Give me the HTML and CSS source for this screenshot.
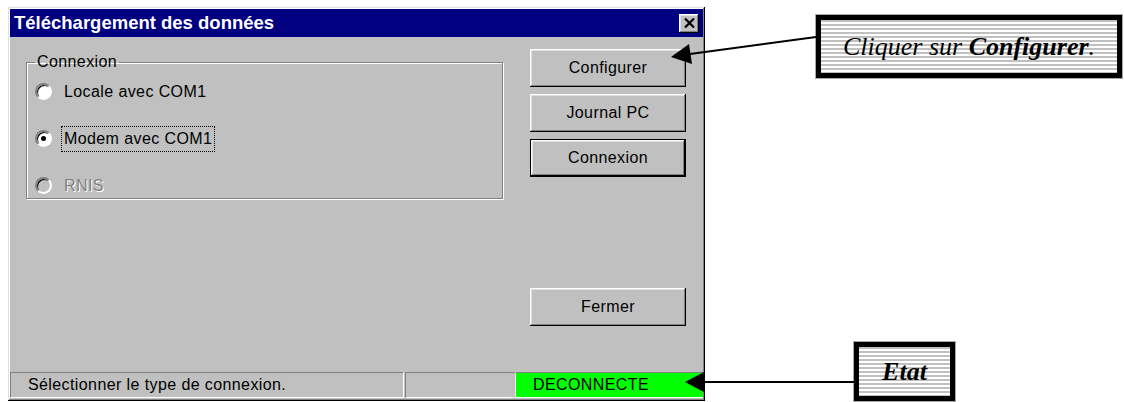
FILE: index.html
```html
<!DOCTYPE html>
<html lang="fr">
<head>
    <meta charset="UTF-8">
    <title>Téléchargement des données</title>
    <link rel="stylesheet" href="styles.css">
</head>
<body>
    <div class="window">
        <div class="titlebar">
            <span class="title">Téléchargement des données</span>
            <span class="close">
                <svg width="11" height="10" viewBox="0 0 11 10"><path d="M1 0.5 L10 9.5 M10 0.5 L1 9.5" stroke="#000" stroke-width="2.2"/></svg>
            </span>
        </div>
        <div class="content">
            <fieldset class="group">
                <legend>Connexion</legend>
                <label class="radio-row"><span class="radio"></span><span class="lbl">Locale avec COM1</span></label>
                <label class="radio-row"><span class="radio checked"></span><span class="lbl focus">Modem avec COM1</span></label>
                <label class="radio-row disabled"><span class="radio"></span><span class="lbl">RNIS</span></label>
            </fieldset>
            <div class="buttons">
                <button class="btn">Configurer</button>
                <button class="btn">Journal PC</button>
                <button class="btn default">Connexion</button>
                <button class="btn close-btn">Fermer</button>
            </div>
        </div>
        <div class="statusbar">
            <div class="pane msg">Sélectionner le type de connexion.</div>
            <div class="pane empty"></div>
            <div class="pane state">DECONNECTE</div>
        </div>
    </div>

    <div class="callout callout-config"><span>Cliquer sur <b>Configurer</b>.</span></div>
    <div class="callout callout-etat"><b>Etat</b></div>

    <svg class="arrows" width="1124" height="402" viewBox="0 0 1124 402">
        <line x1="690" y1="54" x2="816" y2="37" stroke="#000" stroke-width="2"/>
        <polygon points="671,57 692,64 689,44" fill="#000"/>
        <line x1="700" y1="382" x2="854" y2="382" stroke="#000" stroke-width="2"/>
        <polygon points="685,382 704,372 704,392" fill="#000"/>
    </svg>
</body>
</html>
```

FILE: styles.css
```css
body {
    margin: 0;
    padding: 7px 0 0 8px;
    background-color: #fff;
    font-family: "Liberation Sans", Arial, sans-serif;
    height: 402px;
    box-sizing: border-box;
    overflow: hidden;
}
.window {
    width: 697px;
    height: 394px;
    box-sizing: border-box;
    padding: 2px;
    background-color: #c0c0c0;
    box-shadow: inset -1px -1px #000, inset 1px 1px #dfdfdf, inset -2px -2px #808080, inset 2px 2px #fff;
    display: flex;
    flex-direction: column;
}
.titlebar {
    height: 28px;
    background-color: #000080;
    color: #fff;
    display: flex;
    align-items: center;
    justify-content: space-between;
    padding-left: 4px;
}
.title {
    font-weight: bold;
    font-size: 18.5px;
}
.close {
    width: 20px;
    height: 19px;
    margin-right: 4px;
    background-color: #c0c0c0;
    box-shadow: inset -1px -1px #000, inset 1px 1px #fff, inset -2px -2px #808080, inset 2px 2px #dfdfdf;
    display: flex;
    align-items: center;
    justify-content: center;
}
.content {
    flex: 1;
    display: flex;
    font-size: 16px;
    letter-spacing: 0.4px;
    color: #000;
}
.group {
    width: 477px;
    height: 146px;
    box-sizing: border-box;
    margin: 16px 0 0 16px;
    padding: 12px 0 0 8px;
    border: 1px solid #808080;
    box-shadow: 1px 1px #fff, inset 1px 1px #fff;
    display: flex;
    flex-direction: column;
    gap: 30px;
}
legend {
    padding: 0 2px;
    margin-left: 0;
    font-size: 16px;
}
.radio-row {
    display: flex;
    align-items: center;
    height: 17px;
    gap: 10px;
}
.radio {
    width: 17px;
    height: 17px;
    box-sizing: border-box;
    border-radius: 50%;
    border: 2px solid;
    border-color: #808080 #fff #fff #808080;
    background-color: #fff;
    box-shadow: inset 1px 1px #000;
    display: flex;
    align-items: center;
    justify-content: center;
}
.radio.checked::after {
    content: "";
    width: 5px;
    height: 5px;
    border-radius: 50%;
    background-color: #000;
}
.disabled .radio {
    background-color: #c0c0c0;
}
.lbl {
    padding: 3px 2px;
}
.lbl.focus {
    outline: 1px dotted #000;
}
.disabled .lbl {
    color: #808080;
    text-shadow: 1px 1px #fff;
}
.buttons {
    margin-left: auto;
    margin-right: 17px;
    padding-top: 12px;
    display: flex;
    flex-direction: column;
    gap: 7px;
}
.btn {
    width: 156px;
    height: 38px;
    font-family: inherit;
    font-size: 16px;
    letter-spacing: 0.4px;
    color: #000;
    background-color: #c0c0c0;
    border: none;
    box-shadow: inset -1px -1px #000, inset 1px 1px #fff, inset -2px -2px #808080, inset 2px 2px #dfdfdf;
    padding: 0;
}
.btn.default {
    box-shadow: inset 0 0 0 1px #000, inset -2px -2px #000, inset 2px 2px #fff, inset -3px -3px #808080, inset 3px 3px #dfdfdf;
}
.btn.close-btn {
    margin-top: 104px;
}
.statusbar {
    height: 26px;
    margin-bottom: 1px;
    display: flex;
    font-size: 16px;
    letter-spacing: 0.4px;
}
.pane {
    height: 100%;
    box-sizing: border-box;
    display: flex;
    align-items: center;
    border-top: 1px solid #808080;
    border-left: 1px solid #808080;
    border-bottom: 1px solid #fff;
    border-right: 1px solid #fff;
}
.msg {
    width: 394px;
    padding-left: 17px;
}
.empty {
    width: 111px;
    margin-left: 1px;
}
.state {
    flex: 1;
    background-color: #00ff00;
    border-left: none;
    border-right: none;
    padding-left: 17px;
}
.callout {
    position: absolute;
    box-sizing: border-box;
    border: 5px solid #000;
    box-shadow: 0 0 0 1px #a8a8a8;
    background: repeating-linear-gradient(to bottom, #c0c0c0 0, #c0c0c0 2px, #fff 2px, #fff 4px);
    display: flex;
    align-items: center;
    justify-content: center;
    font-family: "Liberation Serif", "Times New Roman", serif;
    font-style: italic;
    font-size: 26px;
    color: #000;
}
.callout-config {
    left: 816px;
    top: 15px;
    width: 306px;
    height: 63px;
}
.callout-etat {
    left: 854px;
    top: 342px;
    width: 101px;
    height: 59px;
}
.arrows {
    position: absolute;
    left: 0;
    top: 0;
    pointer-events: none;
}
```
